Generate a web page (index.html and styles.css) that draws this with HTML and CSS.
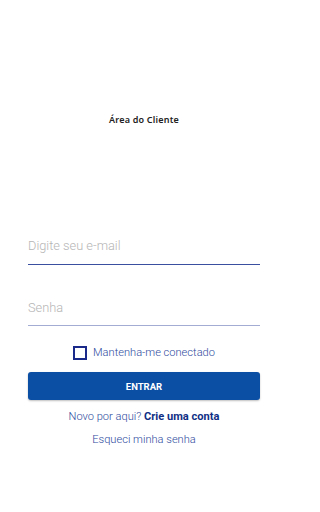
FILE: index.html
```html
<!DOCTYPE html>
<html lang="pt-BR">
<head>
<meta charset="utf-8">
<link rel="stylesheet" href="styles.css">
</head>
<body>
<main class="page">
  <h1 class="title">Área do Cliente</h1>
  <div class="field field-email"><span class="placeholder">Digite seu e-mail</span></div>
  <div class="field field-pass"><span class="placeholder">Senha</span></div>
  <label class="remember"><span class="box"></span><span class="remember-text">Mantenha-me conectado</span></label>
  <button class="btn">ENTRAR</button>
  <p class="signup">Novo por aqui? <strong>Crie uma conta</strong></p>
  <p class="forgot">Esqueci minha senha</p>
</main>
</body>
</html>
```
FILE: styles.css
```css
html, body { margin: 0; padding: 0; background: #fff; }
body { width: 288px; height: 512px; overflow: hidden; font-family: Roboto, "Liberation Sans", sans-serif; }
.page { display: flex; flex-direction: column; padding: 0 28px 0 28px; }
.title { margin: 114px 0 0; height: 12px; line-height: 12px; font-family: "Noto Sans", sans-serif; font-weight: 600; font-size: 9px; letter-spacing: 0.2px; color: #222; text-align: center; }
.field { line-height: 16px; font-size: 12.8px; font-weight: 300; color: #b5b5b5; }
.field-email { margin-top: 102px; padding: 10px 0 10px; border-bottom: 1.5px solid #3a4fa0; }
.field-pass { margin-top: 25px; padding: 10px 0 9px; border-bottom: 1.5px solid #a3acd3; }
.remember { margin-top: 20px; display: flex; align-items: center; justify-content: center; gap: 6px; height: 14px; }
.box { width: 10px; height: 10px; border: 2px solid #1a2a8a; box-sizing: content-box; }
.remember-text { font-size: 11.1px; font-weight: 300; color: #2e4a9e; line-height: 14px; }
.btn { margin-top: 12px; height: 28px; border: none; border-radius: 3px; background: #0b4fa5; color: #fff; font-family: Roboto, sans-serif; font-weight: 700; font-size: 9.5px; box-shadow: 0 1px 2px rgba(0,0,0,0.25); }
.signup { margin: 9px 0 0; text-align: center; font-size: 11.1px; line-height: 16px; color: #2e4a9e; font-weight: 300; }
.signup strong { font-weight: 700; color: #102f85; }
.forgot { margin: 7px 0 0; text-align: center; font-size: 11.1px; line-height: 16px; color: #2e4a9e; font-weight: 300; }
```
